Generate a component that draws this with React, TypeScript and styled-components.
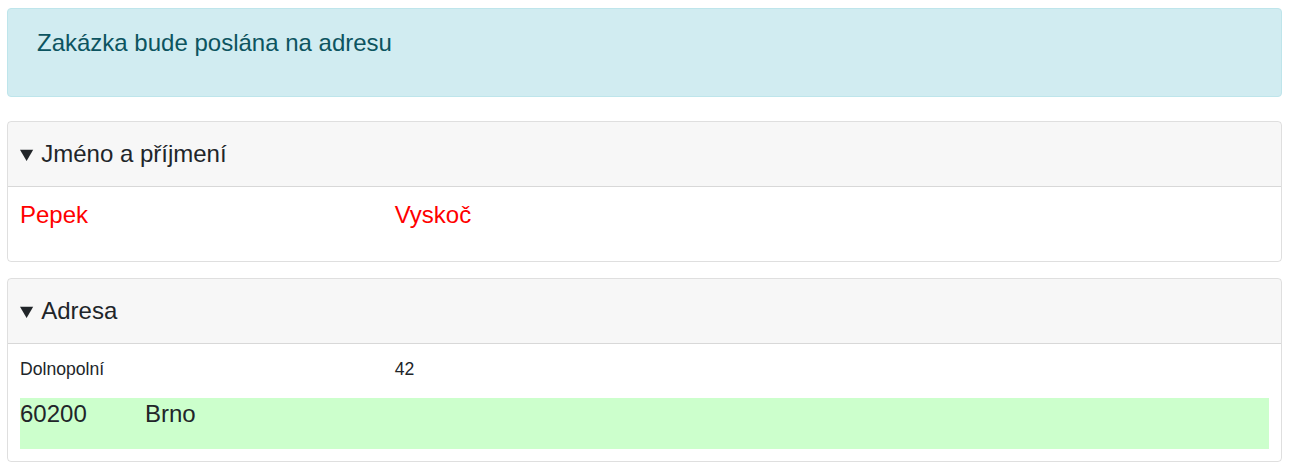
import styled, { createGlobalStyle } from "styled-components";

const GlobalStyle = createGlobalStyle`
  body {
    margin: 0;
    font-family: "Liberation Sans", Arial, sans-serif;
    font-size: 16px;
    color: #212529;
    background: #fff;
  }
`;

const Page = styled.div`
  padding: 8px 10px 0 7px;
`;

const Alert = styled.div`
  background: #d1ecf1;
  border: 1px solid #bee5eb;
  border-radius: 4px;
  color: #0c5460;
  padding: 20px 29px 38px;
  font-size: 24px;
  line-height: 28.8px;
  margin-bottom: 24px;
`;

const Card = styled.details`
  border: 1px solid rgba(0, 0, 0, 0.125);
  border-radius: 4px;
  margin-bottom: 16px;
  overflow: hidden;
`;

const CardHeader = styled.summary`
  background: rgba(0, 0, 0, 0.03);
  border-bottom: 1px solid rgba(0, 0, 0, 0.125);
  padding: 18px 12px 16px;
  font-size: 24px;
  line-height: 28.8px;
  color: #212529;
  cursor: pointer;

  &::marker {
    font-size: 20px;
  }
`;

const CardBody = styled.div`
  padding: 12px 12px 12px;
`;

const Row = styled.div<{ $size: number; $lh: number; $top?: number; $pad?: number; $bg?: string; $color?: string }>`
  display: flex;
  font-size: ${(p) => p.$size}px;
  line-height: ${(p) => p.$lh}px;
  padding-top: ${(p) => p.$top ?? 0}px;
  padding-bottom: ${(p) => p.$pad ?? 0}px;
  background: ${(p) => p.$bg ?? "transparent"};
  color: ${(p) => p.$color ?? "#212529"};
  & + & {
    margin-top: 16px;
  }
`;

const Cell = styled.div<{ $w: string }>`
  flex: 0 0 ${(p) => p.$w};
`;

export default function App() {
  return (
    <Page>
      <GlobalStyle />
      <Alert>Zakázka bude poslána na adresu</Alert>

      <Card open>
        <CardHeader>Jméno a příjmení</CardHeader>
        <CardBody>
          <Row $size={24} $lh={28.8} $top={2} $pad={20} $color="#ff0000">
            <Cell $w="30%">Pepek</Cell>
            <Cell $w="30%">Vyskoč</Cell>
          </Row>
        </CardBody>
      </Card>

      <Card open>
        <CardHeader>Adresa</CardHeader>
        <CardBody>
          <Row $size={17.6} $lh={26}>
            <Cell $w="30%">Dolnopolní</Cell>
            <Cell $w="30%">42</Cell>
          </Row>
          <Row $size={24} $lh={28.8} $top={2} $pad={20} $bg="#ccffcc">
            <Cell $w="10%">60200</Cell>
            <Cell $w="30%">Brno</Cell>
          </Row>
        </CardBody>
      </Card>
    </Page>
  );
}
